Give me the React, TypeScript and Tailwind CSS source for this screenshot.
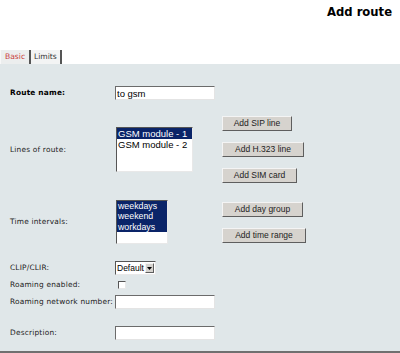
import React from 'react';

const labelFont = { fontFamily: '"DejaVu Sans", Verdana, sans-serif' };

const Label = ({ children, bold = false }: { children: React.ReactNode; bold?: boolean }) => (
  <div
    className={`w-[105px] shrink-0 text-[7.4px] leading-none text-[#222] tracking-[0.2px] ${bold ? 'font-bold text-black' : ''}`}
  >
    {children}
  </div>
);

const TextBox = ({ value = '' }: { value?: string }) => (
  <input
    readOnly
    value={value}
    className="w-[100px] h-[14px] bg-white px-[1px] text-[9.5px] leading-none text-black border border-t-[#6b6b6b] border-l-[#6b6b6b] border-b-[#e4e4e4] border-r-[#e4e4e4] font-['Liberation_Sans',Arial,sans-serif] outline-none"
  />
);

const Btn = ({ children, width }: { children: React.ReactNode; width: string }) => (
  <button
    className={`${width} h-[15px] bg-[#d6d3ce] text-[8.5px] leading-none text-[#222] border border-t-[#f4f4f4] border-l-[#f4f4f4] border-b-[#5e5e5e] border-r-[#5e5e5e] font-['Liberation_Sans',Arial,sans-serif]`}
  >
    {children}
  </button>
);

export default function App() {
  return (
    <div className="w-[400px] h-[353px] bg-white overflow-hidden flex flex-col" style={labelFont}>
      {/* title */}
      <div className="h-[50px] flex justify-end pr-[8px] pt-[7px]">
        <h1 className="text-[11.6px] font-bold text-black leading-none">Add route</h1>
      </div>

      {/* tabs */}
      <div className="h-[14px] flex items-stretch">
        <div className="w-[31px] bg-[#eceeee] border-l border-l-[#f8f8f8] border-r-2 border-r-[#555] flex items-center pl-[4px] text-[7.6px] text-[#c83a3a] leading-none">
          Basic
        </div>
        <div className="w-[31px] bg-[#f3f4f4] border-r-2 border-r-[#555] flex items-center pl-[3px] text-[7.6px] text-[#333] leading-none">
          Limits
        </div>
      </div>

      {/* panel */}
      <div className="flex-1 bg-[#e0e7e9] border-b-2 border-b-[#707070] pl-[10px] flex flex-col">
        <div className="mt-[22px] flex items-center">
          <Label bold>Route name:</Label>
          <TextBox value="to gsm" />
        </div>

        <div className="mt-[16px] flex items-center">
          <Label>Lines of route:</Label>
          <div className="w-[107px] shrink-0">
            <div className="w-[77px] h-[45px] bg-white ml-[1px] border border-t-[#555] border-l-[#555] border-b-[#e8e8e8] border-r-[#e8e8e8] font-['Liberation_Sans',Arial,sans-serif] text-[9.5px] leading-[11px]">
              <div className="bg-[#0a2468] text-white pl-[1px]">GSM module - 1</div>
              <div className="text-black pl-[1px]">GSM module - 2</div>
            </div>
          </div>
          <div className="flex flex-col gap-[11px]">
            <Btn width="w-[70px]">Add SIP line</Btn>
            <Btn width="w-[82px]">Add H.323 line</Btn>
            <Btn width="w-[75px]">Add SIM card</Btn>
          </div>
        </div>

        <div className="mt-[17px] flex items-center">
          <Label>Time intervals:</Label>
          <div className="w-[107px] shrink-0">
            <div className="w-[52px] h-[44px] bg-white ml-[1px] border border-t-[#555] border-l-[#555] border-b-[#e8e8e8] border-r-[#e8e8e8] font-['Liberation_Sans',Arial,sans-serif] text-[8.8px] leading-[10.3px]">
              <div className="bg-[#0a2468] text-white pl-[1px]">
                <div>weekdays</div>
                <div>weekend</div>
                <div>workdays</div>
              </div>
            </div>
          </div>
          <div className="flex flex-col gap-[11px]">
            <Btn width="w-[81px]">Add day group</Btn>
            <Btn width="w-[84px]">Add time range</Btn>
          </div>
        </div>

        <div className="mt-[17px] flex items-center">
          <Label>CLIP/CLIR:</Label>
          <div className="w-[41px] h-[14px] bg-white flex items-center border border-t-[#555] border-l-[#555] border-b-[#e8e8e8] border-r-[#e8e8e8]">
            <span className="flex-1 pl-[1px] text-[8.5px] leading-none text-black font-['Liberation_Sans',Arial,sans-serif]">
              Default
            </span>
            <span className="w-[9px] h-[10px] mr-[1px] bg-[#d6d3ce] border border-t-[#f4f4f4] border-l-[#f4f4f4] border-b-[#5e5e5e] border-r-[#5e5e5e] flex items-center justify-center">
              <svg width="5" height="3" viewBox="0 0 5 3">
                <path d="M0 0h5L2.5 3z" fill="#000" />
              </svg>
            </span>
          </div>
        </div>

        <div className="mt-[3px] h-[14px] flex items-center">
          <Label>Roaming enabled:</Label>
          <div className="ml-[3px] w-[8px] h-[8px] bg-white border border-t-[#555] border-l-[#555] border-b-[#e8e8e8] border-r-[#e8e8e8]" />
        </div>

        <div className="mt-[3px] flex items-center">
          <Label>Roaming network number:</Label>
          <TextBox />
        </div>

        <div className="mt-[17px] flex items-center">
          <Label>Description:</Label>
          <TextBox />
        </div>
      </div>
    </div>
  );
}
